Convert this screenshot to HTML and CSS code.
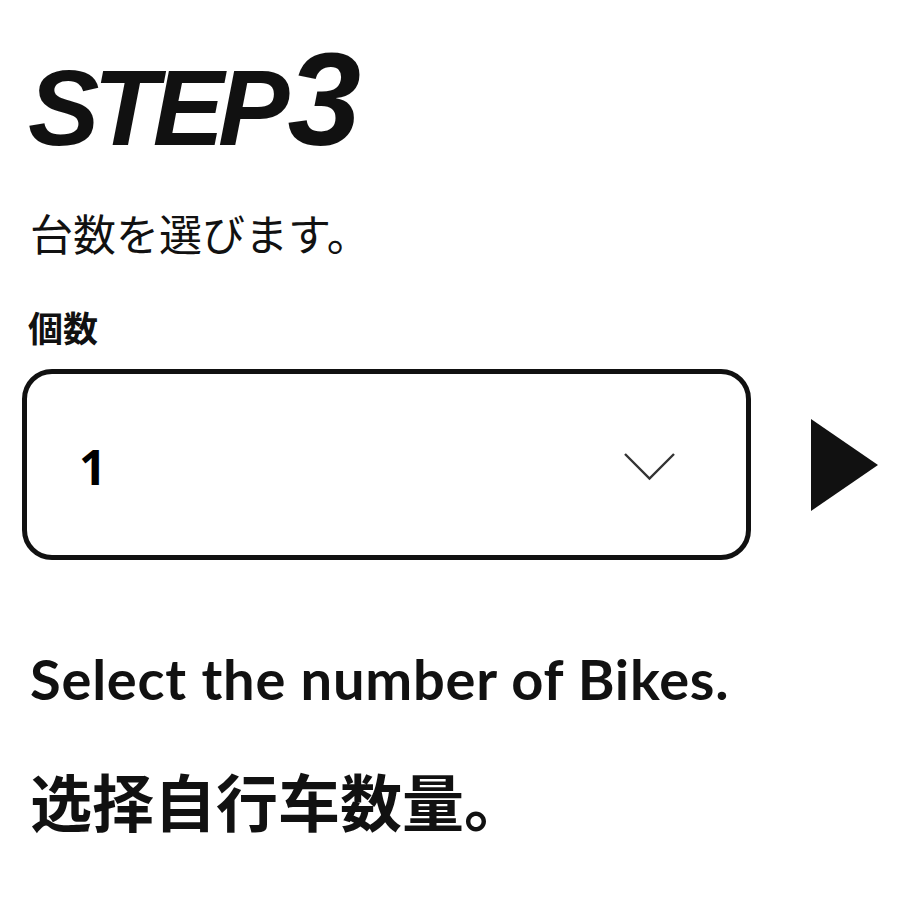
FILE: index.html
```html
<!DOCTYPE html>
<html lang="ja">
<head>
<meta charset="utf-8">
<title>STEP3</title>
<link rel="stylesheet" href="styles.css">
</head>
<body>
<main class="step">
  <h1 class="step-title">STEP<span class="step-num">3</span></h1>
  <p class="step-lead">台数を選びます。</p>
  <label class="field-label" for="qty">個数</label>
  <div class="field-row">
    <div class="select-box" id="qty">
      <span class="select-value">1</span>
      <svg class="chevron" width="51" height="28" viewBox="0 0 51 28" aria-hidden="true">
        <polyline points="1,1 25.5,25.5 50,1" fill="none" stroke="#333" stroke-width="2.4"/>
      </svg>
    </div>
    <svg class="next-arrow" width="67" height="92" viewBox="0 0 67 92" aria-hidden="true">
      <polygon points="0,0 67,46 0,92" fill="#111"/>
    </svg>
  </div>
  <p class="caption-en">Select the number of Bikes.</p>
  <p class="caption-zh">选择自行车数量。</p>
</main>
</body>
</html>
```
FILE: styles.css
```css
html, body {
  margin: 0;
  padding: 0;
  background: #fff;
  color: #111;
}
.step {
  display: flex;
  flex-direction: column;
  padding: 40px 0 0 22px;
}
.step-title {
  margin: 0 0 0 6px;
  font-family: "Liberation Sans", sans-serif;
  font-style: italic;
  font-weight: 700;
  font-size: 107px;
  line-height: 120px;
  letter-spacing: -6px;
  color: #111;
}
.step-num {
  font-size: 132px;
  letter-spacing: 0;
  margin-left: 4px;
}
.step-lead {
  margin: 40px 0 0 8px;
  font-family: "Noto Sans CJK JP", sans-serif;
  font-weight: 400;
  font-size: 43px;
  line-height: 48px;
}
.field-label {
  margin: 50px 0 0 6px;
  font-family: "Noto Sans CJK JP", sans-serif;
  font-weight: 700;
  font-size: 35px;
  line-height: 42px;
}
.field-row {
  display: flex;
  align-items: center;
  gap: 60px;
  margin-top: 21px;
}
.select-box {
  box-sizing: border-box;
  flex: none;
  width: 729px;
  height: 191px;
  border: 5px solid #111;
  border-radius: 30px;
  display: flex;
  align-items: center;
  justify-content: space-between;
  padding: 4px 71px 0 52px;
}
.select-value {
  font-family: "Noto Sans", sans-serif;
  font-weight: 700;
  font-size: 48px;
  color: #000;
}
.chevron,
.next-arrow {
  display: block;
  flex: none;
}
.caption-en {
  margin: 87px 0 0 8px;
  font-family: "Lato", sans-serif;
  font-weight: 700;
  font-size: 56px;
  line-height: 64px;
  letter-spacing: 0.8px;
}
.caption-zh {
  margin: 54px 0 0 8px;
  font-family: "Noto Sans CJK SC", sans-serif;
  font-weight: 700;
  font-size: 62px;
  line-height: 70px;
}
```
